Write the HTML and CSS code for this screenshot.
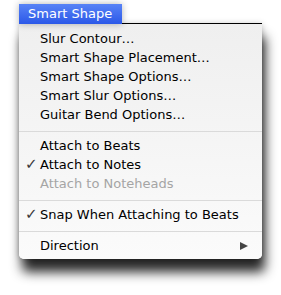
FILE: index.html
```html
<!DOCTYPE html>
<html lang="en">
<head>
  <meta charset="UTF-8">
  <title>Smart Shape</title>
  <link rel="stylesheet" href="styles.css">
</head>
<body>
  <div class="menu">
    <div class="menu-head">
      <span class="menu-title">Smart Shape</span>
      <span class="menu-rule"></span>
    </div>
    <div class="menu-panel">
      <div class="menu-item"><span class="check"></span>Slur Contour…</div>
      <div class="menu-item"><span class="check"></span>Smart Shape Placement…</div>
      <div class="menu-item"><span class="check"></span>Smart Shape Options…</div>
      <div class="menu-item"><span class="check"></span>Smart Slur Options…</div>
      <div class="menu-item"><span class="check"></span>Guitar Bend Options…</div>
      <div class="separator"></div>
      <div class="menu-item"><span class="check"></span>Attach to Beats</div>
      <div class="menu-item"><span class="check">✓</span>Attach to Notes</div>
      <div class="menu-item disabled"><span class="check"></span>Attach to Noteheads</div>
      <div class="separator"></div>
      <div class="menu-item"><span class="check">✓</span>Snap When Attaching to Beats</div>
      <div class="separator"></div>
      <div class="menu-item submenu"><span class="check"></span>Direction<span class="arrow"></span></div>
    </div>
  </div>
</body>
</html>
```

FILE: styles.css
```css
html {
  height: 100%;
}

body {
  box-sizing: border-box;
  height: 100%;
  margin: 0;
  padding: 4px 0 0 19px;
  background: #fff;
  font-family: 'DejaVu Sans', sans-serif;
  font-size: 13px;
  color: #000;
}

.menu {
  width: 243px;
}

.menu-head {
  display: flex;
  align-items: flex-end;
  height: 20px;
}

.menu-title {
  height: 20px;
  line-height: 20px;
  padding: 0 10px 0 9px;
  color: #fff;
  background: linear-gradient(#5883f6, #2b58e8);
  box-shadow: 0 0 7px rgba(0, 0, 0, 0.3);
}

.menu-rule {
  flex: 1;
  border-bottom: 1px solid #000;
}

.menu-panel {
  padding: 5px 0 4px;
  background: linear-gradient(#efefef, #fbfbfb);
  border-radius: 0 0 5px 5px;
  box-shadow: 3px 13px 12px rgba(0, 0, 0, 0.85), 0 0 6px rgba(0, 0, 0, 0.25);
}

.menu-item {
  display: flex;
  align-items: center;
  height: 19px;
  line-height: 19px;
  white-space: nowrap;
}

.check {
  width: 15px;
  padding-left: 6px;
  font-size: 15px;
  color: #3a3a3a;
}

.disabled {
  color: #a5a5a5;
}

.separator {
  margin: 7px 0 4px;
  border-top: 1px solid #dadada;
}

.arrow {
  margin-left: auto;
  margin-right: 14px;
  width: 0;
  height: 0;
  border-left: 8px solid #444;
  border-top: 4.5px solid transparent;
  border-bottom: 4.5px solid transparent;
}
```
